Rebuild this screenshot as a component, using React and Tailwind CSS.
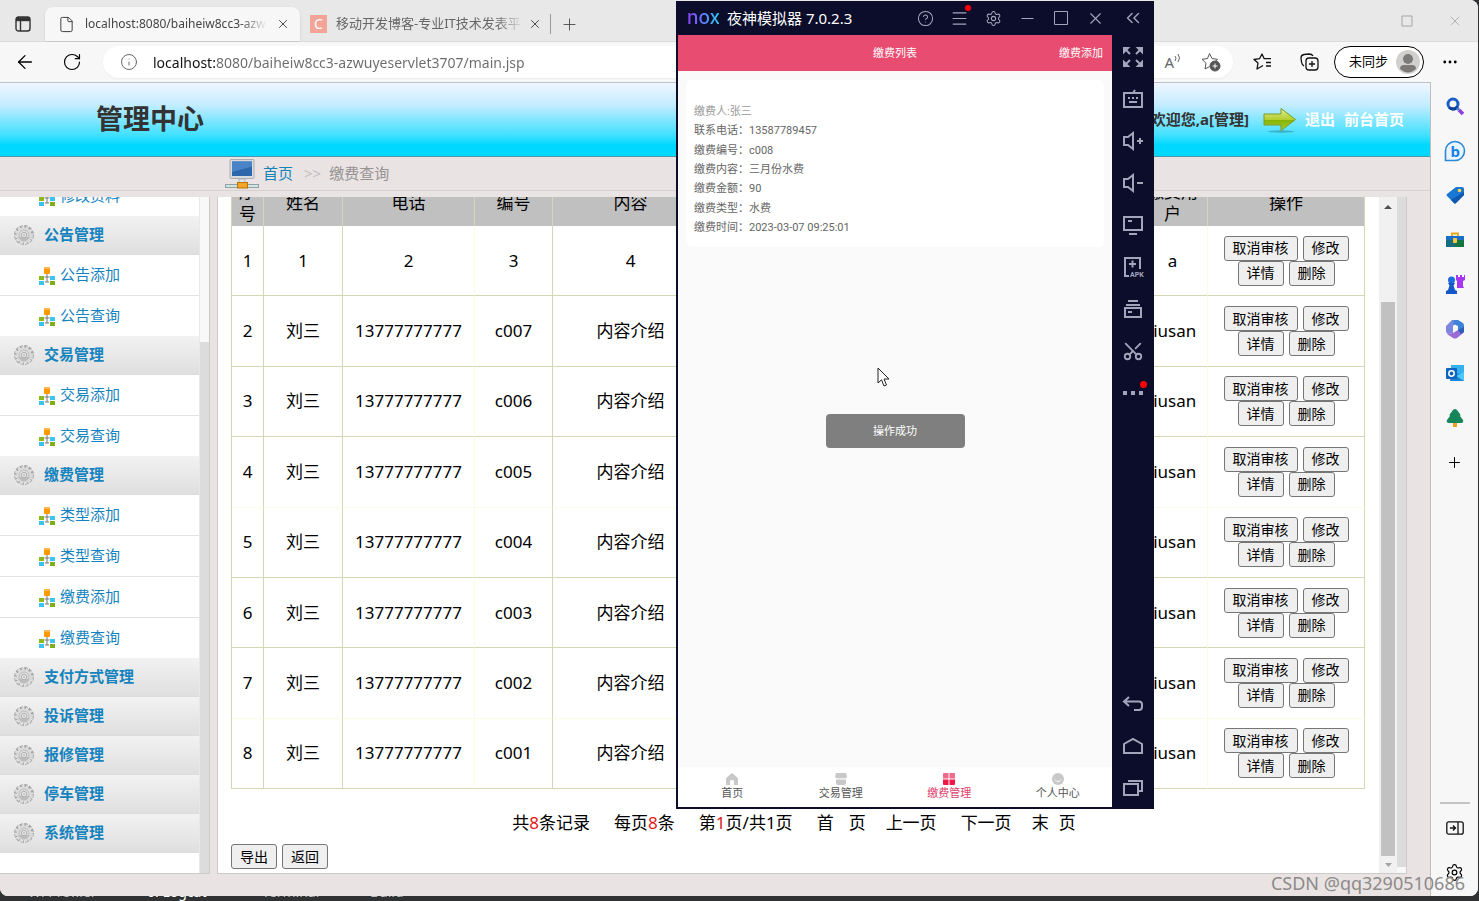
import {
  ArrowLeft,
  ChevronsLeft,
  CircleHelp,
  Ellipsis,
  File,
  Info,
  Menu,
  Minus,
  Plus,
  RotateCw,
  Scissors,
  Settings,
  Square,
  X,
} from 'lucide-react';

const menu = [
  { title: null, list: 'h-[82px]', items: ['密码修改', '修改资料'] },
  { title: '公告管理', list: 'h-[81px]', items: ['公告添加', '公告查询'] },
  { title: '交易管理', list: 'h-[81px]', items: ['交易添加', '交易查询'] },
  { title: '缴费管理', list: 'h-[163px]', items: ['类型添加', '类型查询', '缴费添加', '缴费查询'] },
  { title: '支付方式管理', items: [] },
  { title: '投诉管理', items: [] },
  { title: '报修管理', items: [] },
  { title: '停车管理', items: [] },
  { title: '系统管理', items: [] },
];

const rows = [
  { id: 1, name: '1', tel: '2', code: '3', content: '4', user: 'a' },
  { id: 2, name: '刘三', tel: '13777777777', code: 'c007', content: '内容介绍', user: 'liusan' },
  { id: 3, name: '刘三', tel: '13777777777', code: 'c006', content: '内容介绍', user: 'liusan' },
  { id: 4, name: '刘三', tel: '13777777777', code: 'c005', content: '内容介绍', user: 'liusan' },
  { id: 5, name: '刘三', tel: '13777777777', code: 'c004', content: '内容介绍', user: 'liusan' },
  { id: 6, name: '刘三', tel: '13777777777', code: 'c003', content: '内容介绍', user: 'liusan' },
  { id: 7, name: '刘三', tel: '13777777777', code: 'c002', content: '内容介绍', user: 'liusan' },
  { id: 8, name: '刘三', tel: '13777777777', code: 'c001', content: '内容介绍', user: 'liusan' },
];

const payment = [
  '联系电话：13587789457',
  '缴费编号：c008',
  '缴费内容：三月份水费',
  '缴费金额：90',
  '缴费类型：水费',
  '缴费时间：2023-03-07 09:25:01',
];

function CogIcon() {
  return (
    <svg className="w-5 h-5 shrink-0" viewBox="0 0 20 20" fill="none">
      <circle cx="10" cy="10" r="8.3" stroke="#a3a3a3" strokeWidth="3.2" strokeDasharray="3.2 1.15" />
      <circle cx="10" cy="10" r="8" stroke="#dedede" strokeWidth="2.2" strokeDasharray="2.4 1.950" strokeDashoffset="-0.4" />
      <circle cx="10" cy="10" r="7.4" fill="#dcdcdc" />
      <circle cx="10" cy="10" r="5" stroke="#bdbdbd" strokeWidth="1" />
      <path d="M4 12q3 4.500 6 4.500T16 12z" fill="#bcbcbc" />
      <circle cx="10" cy="10" r="2.600" fill="#ececec" stroke="#aeaeae" />
      <circle cx="10" cy="10" r="0.900" fill="#b4b4b4" />
    </svg>
  );
}

function TreeIcon() {
  return (
    <svg className="w-4 h-[18px] mt-[2px] shrink-0" viewBox="0 0 16 18">
      <path d="M8 7v8M5.500 10h5M6 15h4" stroke="#777" fill="none" />
      <rect x="5" y="0" width="6" height="7" rx="1" fill="#ff9900" />
      <rect x="5" y="0" width="6" height="2" rx="1" fill="#ffb84d" />
      <rect x="0" y="9" width="5" height="4" fill="#8ab81f" />
      <rect x="0" y="14" width="5" height="4" fill="#3cc3f2" />
      <rect x="11" y="9" width="5" height="4" fill="#3cc3f2" />
      <rect x="11" y="14" width="5" height="4" fill="#7fae17" />
    </svg>
  );
}

function ComputerIcon() {
  return (
    <svg className="w-[34px] h-[30px] shrink-0" viewBox="0 0 34 30">
      <rect x="5" y="0.5" width="24" height="19" rx="1" fill="#d9dcdf" stroke="#a9adb1" />
      <rect x="7" y="2.5" width="20" height="14.5" fill="#2c67ab" />
      <path d="M7 2.500h20v5L7 13z" fill="#4a84c6" />
      <rect x="14" y="20" width="6" height="5" fill="#dfe6e8" stroke="#a8b8bb" />
      <rect x="0.5" y="25.500" width="33" height="3" fill="#d3e2e2" stroke="#8ea5a6" />
      <rect x="12.500" y="23.500" width="10" height="5.500" fill="#f2a526" stroke="#b97508" />
    </svg>
  );
}

function GreenArrow() {
  return (
    <svg className="w-[34px] h-[26px] shrink-0" viewBox="0 0 34 26">
      <defs>
        <linearGradient id="arrow" x1="0" y1="0" x2="0" y2="1">
          <stop offset="0" stopColor="#e2ec9a" />
          <stop offset="0.5" stopColor="#b3cf2e" />
          <stop offset="0.52" stopColor="#86b300" />
          <stop offset="1" stopColor="#a9cc3c" />
        </linearGradient>
      </defs>
      <ellipse cx="18" cy="24.500" rx="13" ry="1.2" fill="#2f8da3" opacity="0.6" />
      <path d="M1 7h17V1.500L32.500 12.500 18 23.500V18H1z" fill="url(#arrow)" stroke="#7d9c1e" strokeLinejoin="round" />
    </svg>
  );
}

function TabStrip() {
  return (
    <div className="h-[42px] flex items-end bg-[#e8e8e8] border-b border-[#dcdcdc]">
      <button aria-label="标签操作" className="w-[45px] h-[34px] flex items-center justify-center">
        <svg width="16" height="16" viewBox="0 0 16 16" fill="none" stroke="#333">
          <rect x="1" y="1" width="14" height="14" rx="2.500" strokeWidth="1.4" />
          <path d="M1 3.200h14" strokeWidth="4" />
          <path d="M5.500 4v11" strokeWidth="1.400" />
        </svg>
      </button>
      <div className="w-[255px] h-[34px] flex items-center bg-[#f7f7f7] rounded-t-lg pl-[13px] pr-[10px] shadow-sm">
        <File size={17} strokeWidth={1.3} className="text-[#333] shrink-0" />
        <span className="flex-1 ml-[10px] overflow-hidden whitespace-nowrap text-[12px] text-[#444] [mask-image:linear-gradient(90deg,#000_85%,transparent)]">
          localhost:8080/baiheiw8cc3-azw
        </span>
        <button aria-label="关闭标签" className="ml-[9px]"><X size={14} strokeWidth={1.5} className="text-[#333]" /></button>
      </div>
      <div className="w-[250px] h-[34px] flex items-center pl-[10px] pr-[8px] text-[#666]">
        <span className="w-[17px] h-[18px] shrink-0 bg-[#f2a596] text-white text-[14px] leading-[18px] text-center">C</span>
        <span className="flex-1 ml-[9px] overflow-hidden whitespace-nowrap text-[13px] [mask-image:linear-gradient(90deg,#000_85%,transparent)]">
          移动开发博客-专业IT技术发表平
        </span>
        <button aria-label="关闭标签" className="ml-[4px]"><X size={14} strokeWidth={1.5} className="text-[#333]" /></button>
      </div>
      <div className="h-[34px] flex items-center">
        <span className="w-px h-5 bg-[#999]"></span>
        <button aria-label="新建标签" className="ml-[9px]"><Plus size={19} strokeWidth={1.1} className="text-[#444]" /></button>
      </div>
      <div className="ml-auto h-full flex items-center gap-[34px] pr-[15px] text-[#a5a5a5]">
        <button aria-label="最大化">
          <svg width="12" height="12" viewBox="0 0 12 12" fill="none" stroke="currentColor"><path d="M1 1h10v10H1z" /></svg>
        </button>
        <button aria-label="关闭"><X size={16} strokeWidth={1.2} /></button>
      </div>
    </div>
  );
}

function Toolbar() {
  return (
    <div className="h-[40px] flex items-center bg-[#f7f7f7] pl-[14px] pr-[19px]">
      <button aria-label="后退"><ArrowLeft size={22} strokeWidth={1.4} /></button>
      <button aria-label="刷新" className="ml-[26px]"><RotateCw size={20} strokeWidth={1.4} /></button>
      <div className="flex-1 h-8 ml-[21px] flex items-center bg-white rounded-full pl-[17px] pr-[12px] shadow-xs text-[#666]">
        <Info size={18} strokeWidth={1.3} className="shrink-0" />
        <input
          aria-label="地址"
          defaultValue="localhost:8080/baiheiw8cc3-azwuyeservlet3707/main.jsp"
          className="flex-1 ml-[15px] text-[14px] outline-none text-transparent bg-clip-text bg-[linear-gradient(90deg,#111_62px,#6b6b6b_62px)]"
        />
        <button aria-label="朗读" className="flex items-start text-[15px] leading-4">
          A
          <svg width="7" height="10" viewBox="0 0 7 10" fill="none" stroke="#666">
            <path d="M1 2q2 2 0 5M4 0q3 4 0 8" />
          </svg>
        </button>
        <button aria-label="收藏" className="ml-[20px]">
          <svg width="20" height="20" viewBox="0 0 20 20" fill="none" stroke="#555">
            <path d="M8.500 14.500 4 17l1-5.800L1 7.300l5.500-.8L8.500 1.500l2.500 5 5.500.8-2 2" />
            <circle cx="14" cy="14" r="5" fill="#555" />
            <path d="M14 11.500v5M11.500 14h5" stroke="#fff" />
          </svg>
        </button>
      </div>
      <button aria-label="收藏夹" className="ml-[20px]">
        <svg width="19" height="18" viewBox="0 0 19 18" fill="none" stroke="#111" strokeWidth="1.300" strokeLinejoin="round">
          <path d="M10 12.500 4 16l1-6L1 6.500l5.500-.8L9 1l2.200 4.700H18M13 9.500h5M13 13h5" />
        </svg>
      </button>
      <button aria-label="集锦" className="ml-[28px]">
        <svg width="19" height="18" viewBox="0 0 19 18" fill="none" stroke="#111" strokeWidth="1.300">
          <rect x="6" y="5" width="12" height="12" rx="3" />
          <path d="M12 8v6M9 11h6M4 13Q2 12 1.500 9L1 5Q1 2 4 1.500L9 1q3 0 4 2" />
        </svg>
      </button>
      <button className="w-[90px] h-8 ml-[15px] flex items-center justify-between rounded-full border border-black bg-white pl-[14px] pr-[3px] text-[13px] text-black">
        未同步
        <svg width="24" height="24" viewBox="0 0 24 24">
          <circle cx="12" cy="12" r="12" fill="#d2d0ce" />
          <circle cx="12" cy="9" r="5" fill="#7c7a78" />
          <path d="M4 19q0-4 4-4h8q4 0 4 4-8 7-16 0z" fill="#7c7a78" />
        </svg>
      </button>
      <button aria-label="更多" className="ml-[17px]"><Ellipsis size={18} strokeWidth={1.8} /></button>
    </div>
  );
}

function PageHeader() {
  return (
    <header>
      <div className="h-[75px] flex items-center justify-between border-t border-[#b9c0c8] border-b border-b-[#4a97a8] bg-[linear-gradient(180deg,#f0f6ff_0%,#c4ecff_30%,#3fe0ff_72%,#00d8ff_85%)] pl-[96px] pr-[26px]">
        <h1 className="text-[27px] font-bold text-[#333]">管理中心</h1>
        <div className="flex items-center text-[15px] font-bold text-white">
          <span className="text-[#333]">欢迎您,a[管理]</span>
          <span className="ml-[14px] mr-[8px]"><GreenArrow /></span>
          <a href="#logout">退出</a>
          <a href="#front" className="ml-[9px]">前台首页</a>
        </div>
      </div>
      <nav className="h-[34px] flex items-center border-b border-[#d6d0d0] pl-[225px] text-[15px] leading-5">
        <ComputerIcon />
        <a href="#home" className="ml-[4px] pb-[2px] text-[#1583b8]">首页</a>
        <span className="ml-[11px] pb-[2px] text-[#c4bebe]">&gt;&gt;</span>
        <span className="ml-[8px] pb-[2px] text-[#969292]">缴费查询</span>
      </nav>
    </header>
  );
}

function SideMenu() {
  return (
    <aside className="w-[210px] shrink-0 flex bg-white border-r border-b border-[#cfcaca]">
      <div className="flex-1 flex flex-col justify-end overflow-hidden pb-[20px] text-[15px] text-[#1583bd]">
        {menu.map((group, i) => (
          <div key={i} className="shrink-0">
            {group.title && (
              <h3 className="h-[39px] flex items-center gap-[10px] pl-[14px] font-bold border-b border-[#dcdcdc] bg-gradient-to-b from-[#f2f2f2] to-[#dfdfdf]">
                <CogIcon />
                <a href="#group" className="pb-[2px]">{group.title}</a>
              </h3>
            )}
            {group.items.length > 0 && (
              <ul className={`flex flex-col ${group.list}`}>
                {group.items.map(item => (
                  <li key={item} className="flex-1 flex items-center gap-[5px] pl-[39px] border-b border-[#e3e3e3] last:border-b-0">
                    <TreeIcon />
                    <a href="#item" className="pb-[2px]">{item}</a>
                  </li>
                ))}
              </ul>
            )}
          </div>
        ))}
      </div>
      <div className="w-[10px] bg-[#f8f8f8] border-l border-[#e8e8e8] pt-[145px]">
        <div className="h-full bg-[#dcdcdc]"></div>
      </div>
    </aside>
  );
}

function GrayButton({ children }) {
  return (
    <button className="h-[25px] px-2 border border-[#767676] rounded-[3px] bg-[#efefef] text-[14px] leading-[22px] text-black">
      {children}
    </button>
  );
}

function PaymentTable() {
  const cell = 'border-r border-[#d3d8b4]';
  const faint = 'border-r border-r-[#fbfbe6]';
  return (
    <table className="w-full h-[609px] shrink-0 table-fixed border-separate border-spacing-0 border-l border-[#d3d8b4] text-center text-[17px] leading-[22px] text-black">
      <colgroup>
        <col className="w-[32px]" />
        <col className="w-[79px]" />
        <col className="w-[132px]" />
        <col className="w-[78px]" />
        <col className="w-[156px]" />
        <col />
        <col className="w-[70px]" />
        <col className="w-[157px]" />
      </colgroup>
      <thead className="bg-[#c0c0c0]">
        <tr className="h-[46px] [&>th]:font-normal [&>th]:px-[5px]">
          <th className={cell}>序号</th>
          <th className={cell}>姓名</th>
          <th className={cell}>电话</th>
          <th className={cell}>编号</th>
          <th className={cell}>内容</th>
          <th className={cell}></th>
          <th className={cell}>缴费用户</th>
          <th className={cell}>操作</th>
        </tr>
      </thead>
      <tbody>
        {rows.map(row => (
          <tr key={row.id} className={row.id === 4 || row.id === 7 ? '[&>td]:border-b [&>td]:border-b-[#fbfbe6]' : '[&>td]:border-b [&>td]:border-b-[#d3d8b4]'}>
            <td className={cell}>{row.id}</td>
            <td className={cell}>{row.name}</td>
            <td className={faint}>{row.tel}</td>
            <td className={cell}>{row.code}</td>
            <td className={cell}>{row.content}</td>
            <td className={cell}></td>
            <td className={faint}>{row.user}</td>
            <td className={cell}>
              <div className="flex flex-col items-center">
                <div className="flex gap-[5px]">
                  <GrayButton>取消审核</GrayButton>
                  <GrayButton>修改</GrayButton>
                </div>
                <div className="flex gap-[5px]">
                  <GrayButton>详情</GrayButton>
                  <GrayButton>删除</GrayButton>
                </div>
              </div>
            </td>
          </tr>
        ))}
      </tbody>
    </table>
  );
}

function MainPanel() {
  return (
    <main className="flex-1 ml-[7px] mr-[23px] flex bg-white border-x border-b border-[#cfcaca]">
      <div className="flex-1 flex flex-col justify-end overflow-hidden pl-[13px] pr-[14px] pb-[4px]">
        <PaymentTable />
        <div className="h-[55px] shrink-0 flex items-center justify-center gap-6 pt-[12px] pr-[8px] text-[17px] text-black">
          <span>共<span className="text-[#e01818]">8</span>条记录</span>
          <span>每页<span className="text-[#e01818]">8</span>条</span>
          <span>第<span className="text-[#e01818]">1</span>页/共1页</span>
          <span className="flex gap-5">
            <a href="#first" className="flex gap-[15px]"><span>首</span><span>页</span></a>
            <a href="#prev">上一页</a>
          </span>
          <span className="flex gap-5">
            <a href="#next">下一页</a>
            <a href="#last" className="flex gap-[10px]"><span>末</span><span>页</span></a>
          </span>
        </div>
        <div className="shrink-0 flex gap-[5px]">
          <GrayButton>导出</GrayButton>
          <GrayButton>返回</GrayButton>
        </div>
      </div>
      <div className="w-[18px] flex flex-col items-center bg-[#f1f1f1] pt-[7px]">
        <svg width="8" height="5" viewBox="0 0 8 5"><path d="M0 5l4-4 4 4z" fill="#505050" /></svg>
        <div className="flex-1 w-[14px] mt-[93px] bg-[#c1c1c1]"></div>
        <div className="h-[17px] flex items-center">
          <svg width="7" height="4" viewBox="0 0 7 4"><path d="M0 0h7L3.500 4z" fill="#a3a3a3" /></svg>
        </div>
      </div>
      <div className="w-[9px] bg-[#f8f8f8] pb-[6px]">
        <div className="h-full bg-[#dcdcdc]"></div>
      </div>
    </main>
  );
}

function EdgeSidebar() {
  return (
    <div className="w-[47px] shrink-0 flex flex-col items-center bg-[#f7f7f7] pt-[13px] pb-[13px] [&>button]:h-[22px] [&>button]:flex [&>button]:items-center">
      <div className="h-[378px] flex flex-col items-center justify-between [&>button]:h-[22px] [&>button]:flex [&>button]:items-center [&>button]:justify-center">
        <button aria-label="搜索">
          <svg width="18" height="18" viewBox="0 0 18 18" fill="none">
            <circle cx="7" cy="7" r="5" stroke="#1a5fc4" strokeWidth="3" />
            <path d="M3.500 10.500a5 5 0 0 0 8-1" stroke="#0b3f96" strokeWidth="3" />
            <path d="M11 11l2 2" stroke="#4a86e8" strokeWidth="3" />
            <path d="M13 13l4 4" stroke="#8a3fe0" strokeWidth="3.500" />
          </svg>
        </button>
        <button aria-label="必应">
          <svg width="22" height="22" viewBox="0 0 22 22">
            <path d="M1.500 20.500V11a9.500 9.500 0 1 1 9.500 9.500z" fill="#e9f6ff" stroke="#2b87d8" strokeWidth="1.600" />
            <text x="6.500" y="16.500" fontSize="15" fontWeight="bold" fill="#1b7fe6" fontFamily="Noto Sans">b</text>
          </svg>
        </button>
        <button aria-label="购物">
          <svg width="18" height="18" viewBox="0 0 18 18">
            <path d="M10 1h6q2 0 2 2v6l-8 8q-1 1-2 0L1 10q-1-1 0-2z" fill="#1877d2" />
            <path d="M18 6v3l-8 8q-1 1-2 0L5 14z" fill="#0f58b0" />
            <circle cx="13.500" cy="4.500" r="1.800" fill="#ffd34d" />
          </svg>
        </button>
        <button aria-label="工具">
          <svg width="18" height="16" viewBox="0 0 18 16">
            <path d="M6 4V1.500h6V4" fill="none" stroke="#e7a713" strokeWidth="1.800" />
            <path d="M0 4h18v4H0z" fill="#1b6fc9" />
            <path d="M0 8h18v7H0z" fill="#14753f" />
            <path d="M0 8h9v7H0z" fill="#176c80" />
            <rect x="7" y="6" width="4" height="5" rx="1" fill="#ffc83d" />
          </svg>
        </button>
        <button aria-label="游戏">
          <svg width="20" height="20" viewBox="0 0 20 20">
            <path d="M11 1h2v2h2V1h2v2h2V1h1v5l-2 1v5l1 2h-7V7l-1-1z" fill="#a538f0" />
            <circle cx="6.500" cy="6" r="3.500" fill="#1e6be0" />
            <path d="M3 9h7l-1.500 2.500L10 16l2 1v3H1v-3l2-1 1.500-4.500z" fill="#1457c8" />
          </svg>
        </button>
        <button aria-label="Microsoft 365">
          <svg width="18" height="20" viewBox="0 0 18 20">
            <path d="M6 1h6L7 7v7l-5 1q-2-1-2-3V7z" fill="#7a86e0" />
            <path d="M8 1h4l5 3q1 1 1 3v6l-6-2V7L7 5z" fill="#3f83d8" />
            <path d="M18 12q0 2-2 3l-5 4q-2 1-4 0l-6-4 6-1 5-3z" fill="#9a6bd6" />
            <path d="M12 11l6-3v5l-3 2z" fill="#2c5fb8" />
          </svg>
        </button>
        <button aria-label="Outlook">
          <svg width="18" height="18" viewBox="0 0 18 18">
            <rect x="5" y="1" width="13" height="12" fill="#35b0f0" />
            <path d="M5 9l13 1v7H4z" fill="#1a86d6" />
            <path d="M18 8v9l-8-5z" fill="#50c8f5" />
            <rect x="0" y="4" width="11" height="11" rx="1" fill="#0f65bd" />
            <circle cx="5.500" cy="9.500" r="2.700" fill="none" stroke="#fff" strokeWidth="1.500" />
          </svg>
        </button>
        <button aria-label="树">
          <svg width="18" height="20" viewBox="0 0 18 20">
            <rect x="7" y="14" width="4" height="5" fill="#f0a020" />
            <path d="M9 1q1 0 2 1l3 4q1 1 0 2l3 4q1 3-2 3H3q-3 0-2-3l3-4q-1-1 0-2l3-4q1-1 2-1z" fill="#17855a" />
          </svg>
        </button>
        <button aria-label="添加"><Plus size={17} strokeWidth={1.400} /></button>
      </div>
      <div className="w-[30px] h-[2px] mt-auto bg-[#c4c4c4]"></div>
      <button aria-label="隐藏侧栏" className="mt-[13px]">
        <svg width="18" height="14" viewBox="0 0 18 14" fill="none" stroke="#111" strokeWidth="1.300">
          <rect x="0.800" y="0.800" width="16.400" height="12.400" rx="2" />
          <path d="M12 1v12M4 7h5M7 4.500 9.500 7 7 9.500" />
        </svg>
      </button>
      <button aria-label="设置" className="mt-[22px]"><Settings size={19} strokeWidth={1.500} /></button>
    </div>
  );
}

function EmulatorTools() {
  const box = 'h-[42px] flex items-center justify-center pt-[2px]';
  return (
    <div className="w-[42px] shrink-0 flex flex-col justify-between text-[#a3a6bb] [&_svg]:overflow-visible">
      <div className="flex flex-col">
        <button aria-label="全屏" className={box}>
          <svg width="20" height="20" viewBox="0 0 20 20" fill="currentColor" stroke="currentColor" strokeWidth="2">
            <path d="M1 1h4L1 5zM19 1v4l-4-4zM19 19h-4l4-4zM1 19v-4l4 4zM2 2l5 5M18 2l-5 5M18 18l-5-5M2 18l5-5" />
          </svg>
        </button>
        <button aria-label="键盘" className={box}>
          <svg width="20" height="18" viewBox="0 0 20 18" fill="none" stroke="currentColor" strokeWidth="2">
            <path d="M1 3h18v14H1zM10 3l2-3" />
            <path d="M5 8h2M9 8h2M13 8h2M6 12h8" />
          </svg>
        </button>
        <button aria-label="音量加" className={box}>
          <svg width="20" height="20" viewBox="0 0 20 20" fill="none" stroke="currentColor" strokeWidth="2">
            <path d="M1 6h4l5-4v16l-5-4H1zM14 10h6M17 7v6" />
          </svg>
        </button>
        <button aria-label="音量减" className={box}>
          <svg width="20" height="20" viewBox="0 0 20 20" fill="none" stroke="currentColor" strokeWidth="2">
            <path d="M1 6h4l5-4v16l-5-4H1zM14 10h6" />
          </svg>
        </button>
        <button aria-label="屏幕" className={box}>
          <svg width="20" height="20" viewBox="0 0 20 20" fill="none" stroke="currentColor" strokeWidth="2">
            <path d="M1 2h18v13H1zM5 6h4M6 19h8" />
          </svg>
        </button>
        <button aria-label="安装APK" className={box}>
          <svg width="20" height="20" viewBox="0 0 20 20" fill="none" stroke="currentColor" strokeWidth="2">
            <path d="M6 19H2V1h15v11M6 7h7M9.500 3.500v7" />
            <text x="7" y="20" fontSize="7" fontWeight="bold" fill="currentColor" stroke="none" fontFamily="Roboto">APK</text>
          </svg>
        </button>
        <button aria-label="多开" className={box}>
          <svg width="18" height="18" viewBox="0 0 18 18" fill="none" stroke="currentColor" strokeWidth="2">
            <path d="M4 1h10M2 5h14M1 8h16v9H1zM4 12h4" />
          </svg>
        </button>
        <button aria-label="截图" className={box}><Scissors size={22} strokeWidth={2} className="-rotate-90" /></button>
        <button aria-label="更多" className={`${box} relative`}>
          <svg width="20" height="4" viewBox="0 0 20 4" fill="currentColor">
            <path d="M0 0h4v4H0zM8 0h4v4H8zM16 0h4v4h-4z" />
          </svg>
          <span className="absolute top-[10px] right-[7px] w-[7px] h-[7px] rounded-full bg-[#ff0000]"></span>
        </button>
      </div>
      <div className="flex flex-col [&>button]:pt-[4px]">
        <button aria-label="返回" className={box}>
          <svg width="20" height="14" viewBox="0 0 20 14" fill="none" stroke="currentColor" strokeWidth="2">
            <path d="M6 0 1 4.500 6 9M1 4.500h15q3 0 3 3v2q0 3.500-3 3.500h-5" />
          </svg>
        </button>
        <button aria-label="主页" className={box}>
          <svg width="20" height="16" viewBox="0 0 20 16" fill="none" stroke="currentColor" strokeWidth="2">
            <path d="M1 15V6l9-5 9 5v9z" />
          </svg>
        </button>
        <button aria-label="最近任务" className={box}>
          <svg width="20" height="16" viewBox="0 0 20 16" fill="none" stroke="currentColor" strokeWidth="2">
            <path d="M1 4h14v11H1zM5 1h14v10h-3" />
          </svg>
        </button>
      </div>
    </div>
  );
}

function PhoneApp() {
  return (
    <div className="flex-1 flex flex-col bg-[#fafafa] text-[11px] font-[Roboto,'Noto_Sans_CJK_SC',sans-serif]">
      <div className="h-[36px] shrink-0 grid grid-cols-3 items-center bg-[#e84c70] px-[9px] pt-[2px] text-white">
        <span className="col-start-2 text-center">缴费列表</span>
        <a href="#add" className="text-right">缴费添加</a>
      </div>
      <div className="flex-1 flex flex-col px-2 pt-[9px]">
        <ul className="h-[167px] flex flex-col justify-between bg-white rounded-md px-2 pt-[22px] pb-[10px] leading-[19px] text-[#666]">
          <li className="text-[#999]">缴费人:张三</li>
          {payment.map(line => <li key={line}>{line}</li>)}
        </ul>
        <div role="status" className="w-[139px] h-[34px] mt-[167px] mx-auto flex items-center justify-center rounded bg-[#7f7f7f] pt-[2px] text-white">
          操作成功
        </div>
      </div>
      <nav className="h-[40px] shrink-0 grid grid-cols-4 bg-white text-[#555] [&>a]:flex [&>a]:flex-col [&>a]:items-center [&>a]:gap-px [&>a]:pt-[6px] leading-[15px]">
        <a href="#index">
          <svg width="12" height="12" viewBox="0 0 12 12"><path d="M0 5l6-5 6 5v7H8V8q-2-2-4 0v4H0z" fill="#c8c8c8" /></svg>
          首页
        </a>
        <a href="#trade">
          <svg width="12" height="12" viewBox="0 0 12 12"><path d="M1 0h10l1 4q-1 2-3 1-1.500 1-3 0-1.500 1-3 0-2 1-3-1zM1 6.500h10V10q0 2-2 2H3q-2 0-2-2z" fill="#c8c8c8" /></svg>
          交易管理
        </a>
        <a href="#pay" className="text-[#e0406c]">
          <svg width="12" height="12" viewBox="0 0 12 12">
            <path d="M0 1q0-1 1-1h4.500v5.500H0zM6.500 0H11q1 0 1 1v4.500H6.500z" fill="#f0688a" />
            <path d="M0 6.500h5.500V12H1q-1 0-1-1zM6.500 6.500H12V11q0 1-1 1H6.500z" fill="#f01848" />
          </svg>
          缴费管理
        </a>
        <a href="#me">
          <svg width="12" height="12" viewBox="0 0 12 12">
            <circle cx="6" cy="6" r="6" fill="#c8c8c8" />
            <path d="M3 6.500q3 4.500 6 0" stroke="#fff" fill="none" />
          </svg>
          个人中心
        </a>
      </nav>
    </div>
  );
}

function Emulator() {
  return (
    <section className="absolute left-[676px] top-px w-[478px] h-[808px] flex flex-col bg-[#0b0d2b] pl-[2px] pb-[2px]">
      <div className="h-[34px] shrink-0 flex items-center justify-between pl-[9px] text-[#a3a6bb]">
        <div className="flex items-center gap-[8px]">
          <span className="w-8 font-[Inter,sans-serif] text-[19px] leading-5 font-medium text-transparent bg-clip-text bg-gradient-to-r from-[#8a3ff0] via-[#5b7bff] to-[#25c8e8]">nox</span>
          <span className="text-[15px] text-white">夜神模拟器 7.0.2.3</span>
        </div>
        <div className="flex items-center [&>button]:h-[34px] [&>button]:w-[34px] [&>button]:flex [&>button]:items-center [&>button]:justify-center">
          <button aria-label="帮助"><CircleHelp size={17} strokeWidth={1.500} /></button>
          <button aria-label="菜单" className="relative">
            <Menu size={19} strokeWidth={1.500} />
            <span className="absolute top-[4px] right-[5px] w-[6px] h-[6px] rounded-full bg-[#ff0000]"></span>
          </button>
          <button aria-label="设置"><Settings size={17} strokeWidth={1.500} /></button>
          <button aria-label="最小化"><Minus size={19} strokeWidth={1.500} /></button>
          <button aria-label="最大化">
            <svg width="14" height="14" viewBox="0 0 14 14" fill="none" stroke="currentColor"><path d="M0.500 0.500h13v13h-13z" /></svg>
          </button>
          <button aria-label="关闭"><X size={19} strokeWidth={1.400} /></button>
          <span className="w-[42px] flex justify-center"><ChevronsLeft size={22} strokeWidth={1.500} /></span>
        </div>
      </div>
      <div className="flex-1 flex">
        <PhoneApp />
        <EmulatorTools />
      </div>
    </section>
  );
}

export default function App() {
  return (
    <div className="relative h-screen flex flex-col overflow-hidden bg-[#2f3133] pr-px font-['Noto_Sans','Noto_Sans_CJK_SC',sans-serif]">
      <div className="flex-1 min-h-0 flex flex-col overflow-hidden rounded-b-lg rounded-tr-lg bg-[#f7f7f7]">
        <TabStrip />
        <Toolbar />
        <div className="flex-1 min-h-0 flex">
          <div className="flex-1 min-w-0 flex flex-col bg-[#e9e3e3] border-r border-[#bfbfbf]">
            <PageHeader />
            <div className="flex-1 min-h-0 flex pt-[6px] pb-[22px]">
              <SideMenu />
              <MainPanel />
            </div>
          </div>
          <EdgeSidebar />
        </div>
      </div>
      <footer className="h-[5px] shrink-0 flex items-end overflow-hidden pl-[28px] text-[14px] leading-[18px] text-[#bbb]">
        <span className="w-[119px]">Wi Profiler</span>
        <span className="w-[115px] text-white">6: Logcat</span>
        <span className="w-[108px]">Terminal</span>
        <span>Build</span>
      </footer>

      <Emulator />

      <svg className="absolute left-[877px] top-[367px] w-[13px] h-[20px]" viewBox="0 0 13 20">
        <path d="M1 1v15l3.500-3.200L7 19l2.500-1-2.500-6h5z" fill="#fff" stroke="#222" />
      </svg>
      <span className="absolute right-[14px] bottom-[6px] text-[18px] leading-6 text-[#8d8a8a]">CSDN @qq3290510686</span>
    </div>
  );
}
